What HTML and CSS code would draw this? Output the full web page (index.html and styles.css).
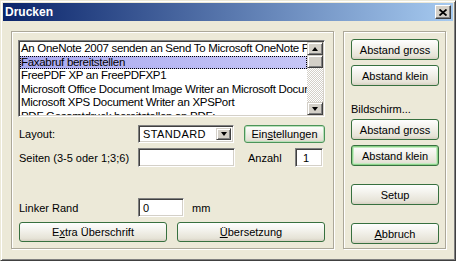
FILE: index.html
```html
<!DOCTYPE html>
<html lang="de">
<head>
    <meta charset="UTF-8">
    <title>Drucken</title>
    <link rel="stylesheet" href="styles.css">
</head>
<body>
    <div class="window">
        <div class="titlebar">
            <span class="title">Drucken</span>
            <span class="close">
                <svg width="8" height="7" viewBox="0 0 8 7">
                    <path d="M0.5 0.5 L7.5 6.5 M7.5 0.5 L0.5 6.5" stroke="#000" stroke-width="1.8" fill="none"/>
                </svg>
            </span>
        </div>
        <div class="dialog">
            <div class="group group-main">
                <div class="listbox">
                    <ul class="items">
                        <li><span>An OneNote 2007 senden an Send To Microsoft OneNote Port:</span></li>
                        <li class="selected"><span>Faxabruf bereitstellen</span></li>
                        <li><span>FreePDF XP an FreePDFXP1</span></li>
                        <li><span>Microsoft Office Document Image Writer an Microsoft Document Imaging Writer Port:</span></li>
                        <li><span>Microsoft XPS Document Writer an XPSPort</span></li>
                        <li><span>PDF Gesamtdruck bereitstellen an PDF:</span></li>
                    </ul>
                    <div class="scrollbar">
                        <div class="sb-btn"><span class="arrow-up"></span></div>
                        <div class="sb-btn sb-thumb"></div>
                        <div class="sb-track"></div>
                        <div class="sb-btn"><span class="arrow-down"></span></div>
                    </div>
                </div>

                <div class="row row-layout">
                    <span class="label">Layout:</span>
                    <div class="combo">
                        <span class="combo-value">STANDARD</span>
                        <span class="combo-btn"><span class="arrow-down"></span></span>
                    </div>
                    <button class="btn btn-default btn-settings">Ein<u>s</u>tellungen</button>
                </div>

                <div class="row row-pages">
                    <span class="label">Seiten (3-5 oder 1;3;6)</span>
                    <div class="field field-pages"></div>
                    <span class="label-count">Anzahl</span>
                    <div class="field field-count">1</div>
                </div>

                <div class="row row-margin">
                    <span class="label">Linker Rand</span>
                    <div class="field field-margin">0</div>
                    <span class="unit">mm</span>
                </div>

                <div class="row row-actions">
                    <button class="btn btn-wide">E<u>x</u>tra Überschrift</button>
                    <button class="btn btn-wide"><u>Ü</u>bersetzung</button>
                </div>
            </div>

            <div class="group group-side">
                <button class="btn btn-side">Abstand gross</button>
                <button class="btn btn-side">Abstand klein</button>
                <div class="side-label">Bildschirm...</div>
                <button class="btn btn-side">Abstand gross</button>
                <button class="btn btn-side btn-focus">Abstand klein</button>
                <button class="btn btn-side btn-gap">Setup</button>
                <button class="btn btn-side btn-gap"><u>A</u>bbruch</button>
            </div>
        </div>
    </div>
</body>
</html>
```

FILE: styles.css
```css
* {
    box-sizing: border-box;
}

body {
    margin: 0;
    font-family: "Liberation Sans", Arial, sans-serif;
    font-size: 11px;
    color: #000;
    background-color: #ece9d8;
}

.window {
    width: 456px;
    height: 261px;
    padding: 2px;
    background-color: #ece9d8;
    border: 1px solid;
    border-color: #ece9d8 #404040 #404040 #ece9d8;
    box-shadow: inset 1px 1px #fff, inset -1px -1px #808080;
}

.titlebar {
    height: 18px;
    display: flex;
    align-items: center;
    justify-content: space-between;
    padding: 0 2px 0 2px;
    background: linear-gradient(to right, #0a246a, #a6caf0);
}

.title {
    color: #fff;
    font-weight: bold;
    font-size: 12px;
}

.close {
    width: 16px;
    height: 14px;
    display: flex;
    align-items: center;
    justify-content: center;
    background-color: #d4d0c8;
    border: 1px solid;
    border-color: #fff #404040 #404040 #fff;
    box-shadow: inset -1px -1px #808080;
}

.dialog {
    display: flex;
    gap: 9px;
    padding: 10px 0 0 8px;
}

.group {
    height: 218px;
    border: 1px solid #aca899;
    box-shadow: inset 1px 1px #fff, 1px 1px #fff;
}

.group-main {
    width: 323px;
    padding: 8px 0 0 6px;
}

.group-side {
    width: 103px;
    padding: 7px 0 0 7px;
    display: flex;
    flex-direction: column;
}

/* printer list */
.listbox {
    width: 307px;
    height: 77px;
    display: flex;
    background-color: #fff;
    border: 1px solid;
    border-color: #808080 #fff #fff #808080;
    box-shadow: inset 1px 1px #404040, inset -1px -1px #d4d0c8;
    padding: 1px;
}

.items {
    flex: 1;
    min-width: 0;
    margin: 0;
    padding: 0;
    list-style: none;
    overflow: hidden;
    font-size: 11.5px;
    letter-spacing: -0.3px;
}

.items li {
    height: 13.5px;
    line-height: 13.5px;
    padding-left: 1px;
    white-space: nowrap;
    overflow: hidden;
}

.items li.selected {
    background: linear-gradient(to right, #a9a9f0, #c6c6f6);
    outline: 1px dotted #000;
    outline-offset: -1px;
}

.scrollbar {
    width: 16px;
    flex-shrink: 0;
    display: flex;
    flex-direction: column;
}

.sb-btn {
    height: 13px;
    display: flex;
    align-items: center;
    justify-content: center;
    background-color: #d4d0c8;
    border: 1px solid;
    border-color: #d4d0c8 #404040 #404040 #d4d0c8;
    box-shadow: inset 1px 1px #fff, inset -1px -1px #808080;
}

.sb-track {
    flex: 1;
    background-image: conic-gradient(#fff 25%, #d4d0c8 0 50%, #fff 0 75%, #d4d0c8 0);
    background-size: 2px 2px;
}

.arrow-up,
.arrow-down {
    width: 0;
    height: 0;
    border-left: 3.5px solid transparent;
    border-right: 3.5px solid transparent;
}

.arrow-up {
    border-bottom: 4px solid #000;
}

.arrow-down {
    border-top: 4px solid #000;
}

/* form rows */
.row {
    display: flex;
    align-items: center;
    padding-left: 1px;
}

.label {
    width: 119px;
}

.row-layout {
    height: 18px;
    margin-top: 8px;
}

.row-pages {
    height: 19px;
    margin-top: 5px;
}

.row-margin {
    height: 19px;
    margin-top: 31px;
}

.row-actions {
    height: 20px;
    margin-top: 5px;
    gap: 10px;
}

.field,
.combo {
    height: 100%;
    background-color: #fff;
    border: 1px solid;
    border-color: #808080 #fff #fff #808080;
    box-shadow: inset 1px 1px #404040, inset -1px -1px #d4d0c8;
    display: flex;
    align-items: center;
    padding-left: 4px;
}

.combo {
    width: 96px;
    padding: 2px 2px 2px 4px;
    justify-content: space-between;
}

.combo-value {
    letter-spacing: 0.4px;
}

.combo-btn {
    width: 15px;
    height: 100%;
    display: flex;
    align-items: center;
    justify-content: center;
    background-color: #d4d0c8;
    border: 1px solid;
    border-color: #d4d0c8 #404040 #404040 #d4d0c8;
    box-shadow: inset 1px 1px #fff, inset -1px -1px #808080;
}

.field-pages {
    width: 97px;
}

.label-count {
    width: 47px;
    margin-left: 13px;
}

.field-count {
    width: 28px;
    padding-left: 7px;
}

.field-margin {
    width: 46px;
}

.unit {
    margin-left: 8px;
}

/* buttons */
.btn {
    font-family: "Liberation Sans", Arial, sans-serif;
    font-size: 11px;
    color: #000;
    padding: 0;
    border: 1px solid #37703f;
    border-radius: 3px;
    background: linear-gradient(#fefefe, #f3f2ec 40%, #e6e3d7 85%, #d6d0c2);
}

.btn u {
    text-decoration-thickness: 1px;
    text-underline-offset: 1px;
}

.btn-settings {
    width: 81px;
    height: 18px;
    margin-left: 10px;
}

.btn-default {
    border-color: #4c9459;
    box-shadow: inset 0 0 0 1px #b7e0b9;
}

.btn-wide {
    width: 148px;
    height: 20px;
}

.btn-side {
    width: 88px;
    height: 21px;
    flex-shrink: 0;
    margin-bottom: 5px;
}

.btn-focus {
    box-shadow: inset 0 0 0 1px #8dd28a, inset 0 0 0 2px #c5eac2;
}

.btn-gap {
    margin-top: 13px;
}

.side-label {
    height: 13px;
    line-height: 13px;
    margin: 12px 0 3px 0;
}
```
